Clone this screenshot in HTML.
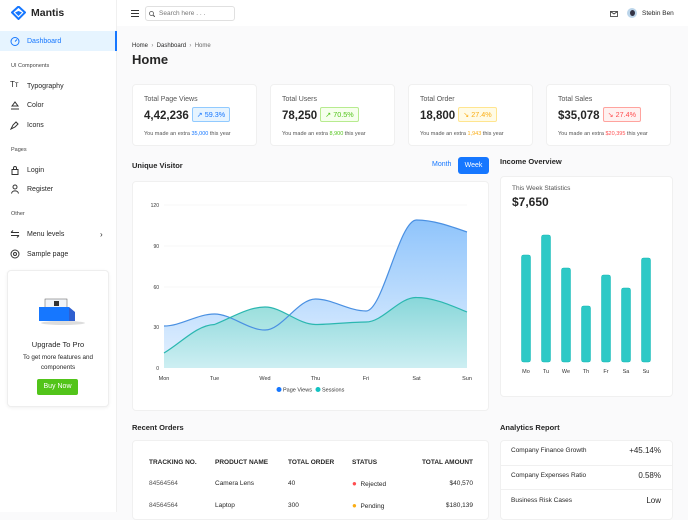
<!DOCTYPE html>
<html><head><meta charset="utf-8"><style>
*{box-sizing:border-box;margin:0;padding:0}
body{width:688px;height:512px;overflow:hidden;background:#fafafb;font-family:"Liberation Sans",sans-serif;color:#262626;position:relative}
.a{position:absolute}
.side{left:0;top:0;width:117px;height:512px;background:#fff;border-right:1px solid #f0f0f0}
.nav{position:absolute;left:0;width:117px;height:20px;font-size:7px;color:#262626;display:flex;align-items:center;padding-left:27px}
.ic{position:absolute;left:10px;top:5px;width:10px;height:10px}
.grp{position:absolute;left:11px;font-size:5.5px;color:#444}
.card{position:absolute;background:#fff;border:1px solid #f0f0f0;border-radius:4px}
.t7{font-size:7px;color:#555}
.big{font-size:11.5px;font-weight:bold;color:#262626}
.pill{display:inline-block;font-size:7.2px;padding:2px 4px;border-radius:2px;border:1px solid;vertical-align:middle;margin-left:3px}
.sm{font-size:5.5px;color:#555}
.h{font-size:7.5px;font-weight:bold;color:#262626}
th{font-size:6.5px;font-weight:bold;text-align:left;color:#262626;height:20px}
td{font-size:6.5px;color:#262626;height:22px}
</style></head><body>
<div class="a side"></div>
<svg class="a" style="left:11px;top:6px" width="15" height="14" viewBox="0 0 15 14"><path d="M7.5 0.5L14 6.5L7.5 13L1 6.5Z" fill="none" stroke="#1677ff" stroke-width="2"/><path d="M4 6.5L7.5 10L11 6.5L7.5 5Z" fill="#1677ff"/></svg>
<div class="a" style="left:31px;top:7px;font-size:10.5px;font-weight:bold;color:#262626">Mantis</div>
<div class="a" style="left:0;top:31px;width:117px;height:20px;background:#e6f4ff;border-right:2px solid #1677ff"></div>
<div class="nav" style="top:31px;color:#1677ff"><svg class="ic" viewBox="0 0 10 10"><circle cx="5" cy="5.5" r="4" fill="none" stroke="#1677ff" stroke-width="1"/><path d="M5 5.5L7 3.5" stroke="#1677ff"/></svg>Dashboard</div>
<div class="grp" style="top:63px">UI Components</div>
<div class="nav" style="top:76px"><span class="ic" style="font-size:8px;top:4px">Tт</span>Typography</div>
<div class="nav" style="top:95px"><svg class="ic" viewBox="0 0 10 10"><path d="M2 6L5 2L8 6Z M1 9H9" fill="none" stroke="#333"/></svg>Color</div>
<div class="nav" style="top:115px"><svg class="ic" viewBox="0 0 10 10"><path d="M1 9L3 5L6 2L8 4L5 7Z" fill="none" stroke="#333"/></svg>Icons</div>
<div class="grp" style="top:147px">Pages</div>
<div class="nav" style="top:160px"><svg class="ic" viewBox="0 0 10 10"><rect x="2" y="4.5" width="6" height="5" fill="none" stroke="#333"/><path d="M3.5 4.5V3a1.5 1.5 0 013 0v1.5" fill="none" stroke="#333"/></svg>Login</div>
<div class="nav" style="top:179px"><svg class="ic" viewBox="0 0 10 10"><circle cx="5" cy="3" r="2" fill="none" stroke="#333"/><path d="M1.5 9.5C2 6 8 6 8.5 9.5" fill="none" stroke="#333"/></svg>Register</div>
<div class="grp" style="top:211px">Other</div>
<div class="nav" style="top:224px"><svg class="ic" viewBox="0 0 10 10"><path d="M1 3.5H9M1 6.5H9M3 1.5L1 3.5M7 8.5L9 6.5" fill="none" stroke="#333"/></svg>Menu levels<span style="position:absolute;left:100px;font-size:8px">›</span></div>
<div class="nav" style="top:244px"><svg class="ic" viewBox="0 0 10 10"><circle cx="5" cy="5" r="4" fill="none" stroke="#333"/><circle cx="5" cy="5" r="1.5" fill="none" stroke="#333"/></svg>Sample page</div>
<div class="card" style="left:7px;top:270px;width:102px;height:137px;border-color:#eee;box-shadow:0 1px 3px rgba(0,0,0,.06)"></div>
<svg class="a" style="left:33px;top:294px" width="56" height="36" viewBox="0 0 56 36"><ellipse cx="30" cy="29" rx="22" ry="2" fill="#ddd"/><rect x="12" y="5" width="22" height="16" fill="#f2f4f8" stroke="#555" stroke-width=".5"/><rect x="21" y="7" width="5" height="5" fill="#333"/><path d="M6 13H36V27H6Z" fill="#1677ff"/><path d="M36 13L42 18V27H36Z" fill="#2f5fd0"/></svg>
<div class="a" style="left:7px;top:340px;width:102px;text-align:center;font-size:7.5px;color:#262626">Upgrade To Pro</div>
<div class="a" style="left:7px;top:353px;width:102px;text-align:center;font-size:6.3px;color:#262626;line-height:10px">To get more features and<br>components</div>
<div class="a" style="left:37px;top:379px;width:41px;height:16px;background:#52c41a;border-radius:2px;color:#fff;font-size:7px;text-align:center;line-height:16px">Buy Now</div>

<div class="a" style="left:117px;top:0;width:571px;height:26px;background:#fff"></div>
<svg class="a" style="left:131px;top:10px" width="8" height="7"><path d="M0 .5H8M0 3.5H8M0 6.5H8" stroke="#333"/></svg>
<div class="a" style="left:145px;top:6px;width:90px;height:15px;border:1px solid #e0e0e0;border-radius:3px;font-size:6.5px;color:#777;line-height:13px;padding-left:13px">Search here . . .</div>
<svg class="a" style="left:149px;top:11px" width="6" height="6"><circle cx="2.5" cy="2.5" r="2" fill="none" stroke="#555" stroke-width=".8"/><path d="M4 4L6 6" stroke="#555"/></svg>
<svg class="a" style="left:610px;top:11px" width="8" height="6"><rect x=".5" y=".5" width="7" height="5" fill="none" stroke="#333" stroke-width=".8"/><path d="M.5 .5L4 3L7.5 .5" fill="none" stroke="#333" stroke-width=".8"/></svg>
<div class="a" style="left:627px;top:8px;width:10px;height:10px;border-radius:50%;background:#bcd5ea"></div>
<div class="a" style="left:629.5px;top:10px;width:5px;height:6px;border-radius:50%;background:#334"></div>
<div class="a" style="left:642px;top:10px;font-size:6.5px;color:#262626">Stebin Ben</div>

<div class="a" style="left:132px;top:43px;font-size:6px;color:#262626">Home &nbsp;<span style="color:#888">›</span>&nbsp; Dashboard &nbsp;<span style="color:#888">›</span>&nbsp; <span style="color:#666">Home</span></div>
<div class="a" style="left:132px;top:52px;font-size:13px;font-weight:bold">Home</div>

<div class="card" style="left:132px;top:84px;width:125px;height:62px;padding:11px 0 0 11px"><div class="t7">Total Page Views</div><div style="margin-top:3px"><span class="big">4,42,236</span><span class="pill" style="color:#1677ff;border-color:#91caff;background:#e6f4ff">↗ 59.3%</span></div><div class="sm" style="margin-top:7px">You made an extra <span style="color:#1677ff">35,000</span> this year</div></div>
<div class="card" style="left:270px;top:84px;width:125px;height:62px;padding:11px 0 0 11px"><div class="t7">Total Users</div><div style="margin-top:3px"><span class="big">78,250</span><span class="pill" style="color:#52c41a;border-color:#b7eb8f;background:#f6ffed">↗ 70.5%</span></div><div class="sm" style="margin-top:7px">You made an extra <span style="color:#52c41a">8,900</span> this year</div></div>
<div class="card" style="left:408px;top:84px;width:125px;height:62px;padding:11px 0 0 11px"><div class="t7">Total Order</div><div style="margin-top:3px"><span class="big">18,800</span><span class="pill" style="color:#faad14;border-color:#ffe58f;background:#fffbe6">↘ 27.4%</span></div><div class="sm" style="margin-top:7px">You made an extra <span style="color:#faad14">1,943</span> this year</div></div>
<div class="card" style="left:546px;top:84px;width:125px;height:62px;padding:11px 0 0 11px"><div class="t7">Total Sales</div><div style="margin-top:3px"><span class="big">$35,078</span><span class="pill" style="color:#ff4d4f;border-color:#ffa39e;background:#fff1f0">↘ 27.4%</span></div><div class="sm" style="margin-top:7px">You made an extra <span style="color:#ff4d4f">$20,395</span> this year</div></div>

<div class="a h" style="left:132px;top:161px">Unique Visitor</div>
<div class="a" style="left:432px;top:161px;font-size:7px;color:#1677ff">Month</div>
<div class="a" style="left:458px;top:157px;width:31px;height:17px;background:#1677ff;border-radius:3px;color:#fff;font-size:7px;text-align:center;line-height:17px">Week</div>
<div class="card" style="left:132px;top:181px;width:357px;height:230px"></div>
<svg class="a" style="left:132px;top:181px" width="357" height="230" viewBox="132 181 357 230">
<defs><linearGradient id="g1" x1="0" y1="0" x2="0" y2="1"><stop offset="0" stop-color="#8fc4fb"/><stop offset="1" stop-color="#e6f2ff"/></linearGradient><linearGradient id="g2" x1="0" y1="0" x2="0" y2="1"><stop offset="0" stop-color="#7fd6d3"/><stop offset="1" stop-color="#c9eef0"/></linearGradient></defs>
<g stroke="#f0f0f0" stroke-width=".6"><path d="M164 205H467M164 246H467M164 287H467M164 327H467"/></g>
<g font-size="5" fill="#333" text-anchor="end"><text x="159" y="207">120</text><text x="159" y="248">90</text><text x="159" y="289">60</text><text x="159" y="329">30</text><text x="159" y="370">0</text></g>
<path d="M164 326C181 326 197 314 214.5 314C231 314 248 330 265 330C282 330 298 299 315.5 299C332 299 349 311 366 311C383 311 399 220 416.5 220C433 220 450 226 467 232L467 368L164 368Z" fill="url(#g1)"/>
<path d="M164 353C181 343 197 325 214.5 324.5C231 318 248 307 265 307C282 307 298 324.5 315.5 324.5C332 324.5 349 322 366 322C383 322 399 297 416.5 297.5C433 297.5 450 305 467 312L467 368L164 368Z" fill="url(#g2)" opacity=".85"/>
<path d="M164 326C181 326 197 314 214.5 314C231 314 248 330 265 330C282 330 298 299 315.5 299C332 299 349 311 366 311C383 311 399 220 416.5 220C433 220 450 226 467 232" fill="none" stroke="#4a90e2" stroke-width="1.2"/>
<path d="M164 353C181 343 197 325 214.5 324.5C231 318 248 307 265 307C282 307 298 324.5 315.5 324.5C332 324.5 349 322 366 322C383 322 399 297 416.5 297.5C433 297.5 450 305 467 312" fill="none" stroke="#2bb7b0" stroke-width="1.2"/>
<g font-size="5.5" fill="#333" text-anchor="middle"><text x="164" y="380">Mon</text><text x="214.5" y="380">Tue</text><text x="265" y="380">Wed</text><text x="315.5" y="380">Thu</text><text x="366" y="380">Fri</text><text x="416.5" y="380">Sat</text><text x="467" y="380">Sun</text></g>
<circle cx="279" cy="389.5" r="2.5" fill="#1677ff"/><text x="283" y="391.5" font-size="5.5" fill="#333">Page Views</text>
<circle cx="318" cy="389.5" r="2.5" fill="#13c2c2"/><text x="322" y="391.5" font-size="5.5" fill="#333">Sessions</text>
</svg>

<div class="a h" style="left:500px;top:157px">Income Overview</div>
<div class="card" style="left:500px;top:176px;width:173px;height:221px;padding:8px 0 0 11px"><div style="font-size:6.5px;color:#555">This Week Statistics</div><div style="font-size:12px;font-weight:bold;margin-top:3px">$7,650</div></div>
<svg class="a" style="left:500px;top:176px" width="173" height="221" viewBox="500 176 173 221">
<g fill="#2ec9c6" stroke="#13b8b5" stroke-width=".5"><rect x="521.5" y="255" width="9" height="107" rx="2"/><rect x="541.5" y="235" width="9" height="127" rx="2"/><rect x="561.5" y="268" width="9" height="94" rx="2"/><rect x="581.5" y="306" width="9" height="56" rx="2"/><rect x="601.5" y="275" width="9" height="87" rx="2"/><rect x="621.5" y="288" width="9" height="74" rx="2"/><rect x="641.5" y="258" width="9" height="104" rx="2"/></g>
<g font-size="5.5" fill="#333" text-anchor="middle"><text x="526" y="373">Mo</text><text x="546" y="373">Tu</text><text x="566" y="373">We</text><text x="586" y="373">Th</text><text x="606" y="373">Fr</text><text x="626" y="373">Sa</text><text x="646" y="373">Su</text></g>
</svg>

<div class="a h" style="left:132px;top:423px">Recent Orders</div>
<div class="card" style="left:132px;top:440px;width:357px;height:80px"></div>
<table class="a" style="left:149px;top:452px;width:324px;border-collapse:collapse">
<tr><th style="width:66px">TRACKING NO.</th><th style="width:73px">PRODUCT NAME</th><th style="width:64px">TOTAL ORDER</th><th>STATUS</th><th style="text-align:right">TOTAL AMOUNT</th></tr>
<tr><td style="color:#555">84564564</td><td>Camera Lens</td><td>40</td><td><span style="color:#ff4d4f;font-size:8px">●</span>&nbsp; Rejected</td><td style="text-align:right">$40,570</td></tr>
<tr><td style="color:#555">84564564</td><td>Laptop</td><td>300</td><td><span style="color:#faad14;font-size:8px">●</span>&nbsp; Pending</td><td style="text-align:right">$180,139</td></tr>
</table>
<div class="a h" style="left:500px;top:423px">Analytics Report</div>
<div class="card" style="left:500px;top:440px;width:173px;height:80px"></div>
<div class="a" style="left:500px;top:465px;width:173px;border-top:1px solid #f0f0f0"></div>
<div class="a" style="left:500px;top:489px;width:173px;border-top:1px solid #f0f0f0"></div>
<div class="a" style="left:511px;top:447px;font-size:6.5px">Company Finance Growth</div><div class="a" style="left:600px;width:61px;text-align:right;top:446px;font-size:8px">+45.14%</div>
<div class="a" style="left:511px;top:472px;font-size:6.5px">Company Expenses Ratio</div><div class="a" style="left:600px;width:61px;text-align:right;top:471px;font-size:8px">0.58%</div>
<div class="a" style="left:511px;top:497px;font-size:6.5px">Business Risk Cases</div><div class="a" style="left:600px;width:61px;text-align:right;top:496px;font-size:8px">Low</div>
</body></html>
